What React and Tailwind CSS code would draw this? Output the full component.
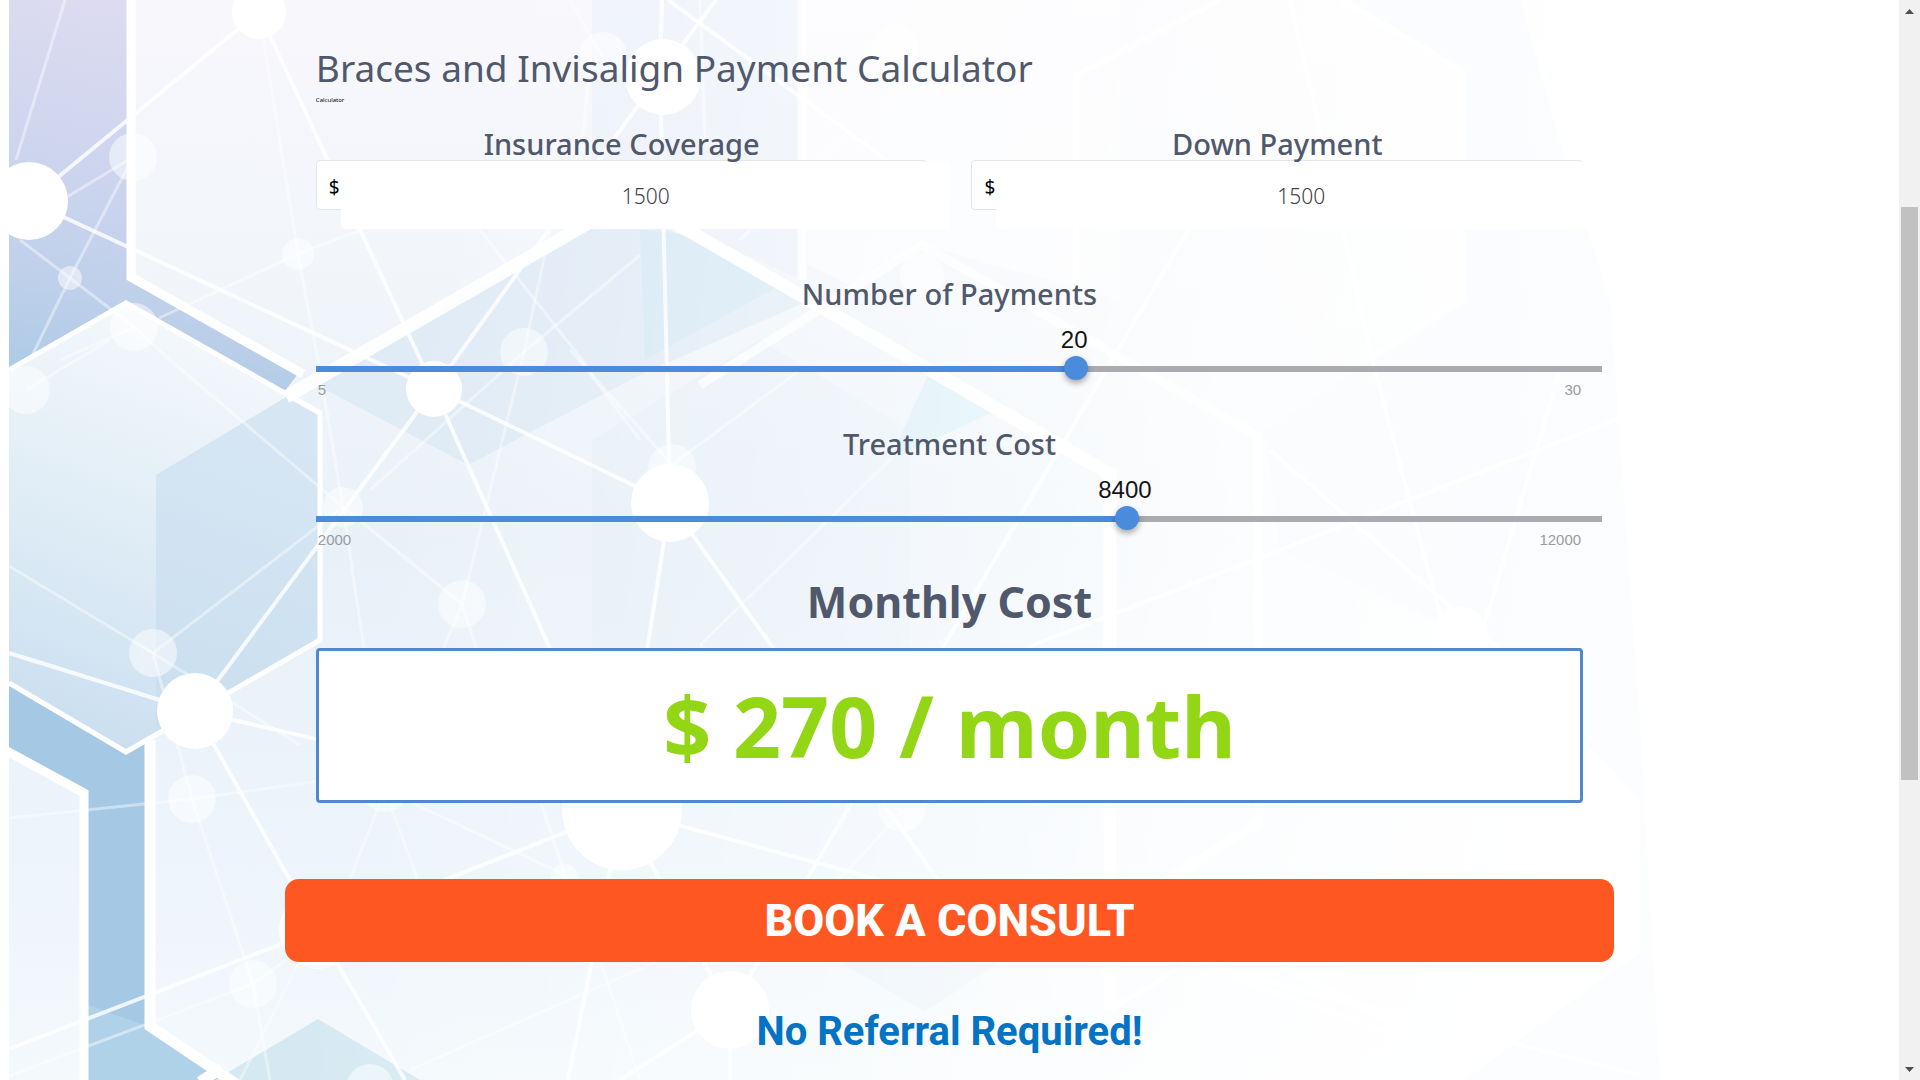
import { useState } from "react";

const strongLines = [
  [29, 201, 259, 12], [29, 201, 434, 389], [259, 12, 434, 389], [660, 75, 434, 389],
  [434, 389, 670, 503], [434, 389, 195, 711], [434, 389, 622, 810], [195, 711, 9, 653],
  [195, 711, 318, 930], [195, 711, 622, 810], [318, 930, 9, 1049], [318, 930, 622, 810],
  [318, 930, 405, 1080], [622, 810, 670, 503], [670, 503, 660, 75], [670, 503, 945, 890],
  [622, 810, 880, 880], [1200, 210, 730, 1010], [730, 1010, 622, 810], [730, 1010, 620, 1080],
  [730, 1010, 730, 1080], [622, 810, 568, 1080], [660, 75, 662, 0], [660, 75, 716, 0],
  [668, 0, 900, 170], [1028, 647, 1280, 550], [1280, 550, 1770, 360], [1270, 450, 1500, 650],
  [1375, 370, 1440, 615], [1280, 985, 1640, 1075], [1200, 960, 1280, 985], [1110, 1010, 1190, 962],
  [1290, 0, 1375, 370], [1190, 962, 1465, 1060], [1560, 370, 1480, 640],
];

const dimLines = [
  [65, 0, 16, 160], [133, 157, 29, 220], [133, 157, 70, 278], [70, 278, 20, 240],
  [70, 278, 134, 327], [70, 278, 30, 360], [298, 254, 159, 318], [298, 254, 440, 200],
  [259, 12, 298, 254], [298, 254, 318, 360], [318, 360, 343, 507], [524, 352, 640, 255],
  [524, 352, 550, 230], [524, 352, 370, 490], [524, 352, 462, 604], [170, 360, 343, 507],
  [343, 507, 462, 604], [9, 566, 153, 653], [153, 653, 343, 507], [153, 653, 192, 799],
  [153, 653, 300, 745], [192, 799, 9, 818], [192, 799, 400, 770], [192, 799, 253, 984],
  [253, 984, 270, 1080], [343, 507, 385, 790], [385, 790, 318, 960], [253, 984, 9, 1076],
  [462, 604, 385, 790], [462, 604, 500, 720], [385, 790, 425, 900], [385, 790, 565, 875],
  [134, 327, 60, 360], [134, 327, 170, 360], [26, 390, 110, 340], [565, 875, 540, 800],
  [672, 465, 800, 370], [672, 465, 570, 350], [580, 360, 640, 440], [902, 812, 700, 645],
  [902, 812, 820, 900], [480, 230, 590, 370], [240, 1080, 300, 960], [410, 1070, 660, 960],
  [700, 645, 900, 450], [600, 960, 640, 1080], [253, 984, 300, 950],
  [603, 58, 570, 0], [580, 170, 590, 60], [700, 0, 705, 140], [740, 240, 850, 130],
];

const strongNodes = [
  [29, 201, 39], [259, 12, 27], [434, 389, 28], [670, 503, 39], [195, 711, 38],
  [622, 810, 60], [730, 1010, 39], [663, 77, 38], [318, 930, 39], [1460, 635, 28],
];

const dimNodes = [
  [133, 157, 24], [70, 278, 12], [298, 254, 16], [134, 327, 24], [26, 390, 24],
  [524, 352, 24], [343, 507, 20], [153, 653, 24], [462, 604, 24], [192, 799, 24],
  [253, 984, 24], [370, 1088, 24], [385, 788, 24], [672, 468, 24], [902, 808, 24],
  [565, 878, 14], [603, 56, 24], [895, 48, 24], [922, 275, 22],
];

function HexagonBackdrop() {
  return (
    <svg
      aria-hidden="true"
      className="absolute inset-0 h-full w-full"
      viewBox="0 0 1899 1080"
      preserveAspectRatio="xMinYMin slice"
    >
      <defs>
        <linearGradient id="deep" gradientUnits="userSpaceOnUse" x1="100" y1="0" x2="20" y2="400">
          <stop offset="0" stopColor="#dddbf0" />
          <stop offset="0.4" stopColor="#cdd5ee" />
          <stop offset="0.7" stopColor="#bfd0ea" />
          <stop offset="1" stopColor="#a8c8e5" />
        </linearGradient>
        <linearGradient id="pale" x1="0" y1="0" x2="0" y2="1">
          <stop offset="0" stopColor="#f8f7fc" />
          <stop offset="0.14" stopColor="#f4f6fb" />
          <stop offset="0.28" stopColor="#f1f5fa" />
          <stop offset="0.5" stopColor="#e9f1f8" />
          <stop offset="0.8" stopColor="#edf4fb" />
          <stop offset="1" stopColor="#f4f9fc" />
        </linearGradient>
        <linearGradient id="hexFill" gradientUnits="userSpaceOnUse" x1="240" y1="340" x2="90" y2="740">
          <stop offset="0" stopColor="#f5f8fc" />
          <stop offset="0.5" stopColor="#e0edf6" />
          <stop offset="1" stopColor="#cbdff0" />
        </linearGradient>
        <linearGradient id="fade" gradientUnits="userSpaceOnUse" x1="450" y1="0" x2="1650" y2="160">
          <stop offset="0" stopColor="#fff" stopOpacity="0" />
          <stop offset="0.35" stopColor="#fff" stopOpacity="0.35" />
          <stop offset="0.7" stopColor="#fff" stopOpacity="0.82" />
          <stop offset="1" stopColor="#fff" stopOpacity="1" />
        </linearGradient>
      </defs>

      <rect width="1899" height="1080" fill="#fefefe" />
      <rect x="9" width="1640" height="1080" fill="url(#pale)" />

      <path d="M9 0H131V278L298 374L284 392L126 303L9 370Z" fill="url(#deep)" />
      <path d="M9 683L126 752L150 738V1027L222 1080H88V793L9 748Z" fill="#a5c8e4" />
      <path d="M88 1005L150 1027L222 1068L200 1080H88Z" fill="#b0d2e8" />

      <path d="M126 303L320 413V640L126 752L9 683V370Z" fill="url(#hexFill)" />
      <path d="M156 475L286 397L318 415V640L156 735Z" fill="#c6dcee" fillOpacity="0.6" />
      <path d="M315 384L620 205L810 300L640 375L468 465Z" fill="#d8e7f4" fillOpacity="0.7" />
      <path d="M592 440L760 340L910 430V648H592Z" fill="#dfebf6" fillOpacity="0.4" />
      <path d="M690 235L775 288L645 360L640 230Z" fill="#cde6f3" fillOpacity="0.6" />
      <path d="M930 370L993 412L890 460Z" fill="#c6e8f6" fillOpacity="0.7" />
      <path d="M318 1019L420 1080H215Z" fill="#d6e9f2" />
      <path d="M840 962H1000L925 1012Z" fill="#e1edf5" fillOpacity="0.7" />

      <path d="M592 0H802V280L690 230H592Z" fill="#e6edf7" fillOpacity="0.5" />
      <path d="M802 0H1120V300L922 245L850 285L802 262Z" fill="#fff" fillOpacity="0.5" />
      <rect x="9" width="1890" height="1080" fill="url(#fade)" />
      <path
        d="M1350 0H1520L1565 160L1610 300L1640 720L1660 1080H1465L1640 950V800L1500 650L1280 550L1265 430L1462 300V70Z"
        fill="#f8fbff"
        fillOpacity="0.4"
      />

      <g stroke="#fff" strokeWidth="3" strokeOpacity="0.42">
        {dimLines.map(([x1, y1, x2, y2], i) => (
          <line key={i} x1={x1} y1={y1} x2={x2} y2={y2} />
        ))}
      </g>
      <g fill="#fff" fillOpacity="0.5">
        {dimNodes.map(([cx, cy, r], i) => (
          <circle key={i} cx={cx} cy={cy} r={r} />
        ))}
      </g>
      <g stroke="#fff" strokeWidth="4" strokeOpacity="0.8">
        {strongLines.map(([x1, y1, x2, y2], i) => (
          <line key={i} x1={x1} y1={y1} x2={x2} y2={y2} />
        ))}
      </g>

      <g fill="none" stroke="#fff">
        <path d="M131 0V277L303 374" strokeWidth="9" />
        <path d="M9 370L126 303L320 413V640L126 752L9 683" strokeWidth="5" />
        <path d="M5 750L84 793V1080" strokeWidth="9" />
        <path d="M150 740V1026L236 1084M222 1068L200 1082" strokeWidth="11" />
        <path d="M286 397L632 198L1110 474V1010" strokeWidth="13" strokeOpacity="0.9" />
        <path d="M802 0V280" strokeWidth="9" strokeOpacity="0.8" />
        <path d="M700 385L922 245L1258 436V823L1150 890" strokeWidth="9" strokeOpacity="0.7" />
        <path d="M1076 300V75L1220 0M1340 0L1462 70V300L1370 360" strokeWidth="6" strokeOpacity="0.7" />
        <path d="M1280 965L1465 1060L1500 1035L1640 950" strokeWidth="7" strokeOpacity="0.8" />
      </g>

      <g fill="#fff">
        {strongNodes.map(([cx, cy, r], i) => (
          <circle key={i} cx={cx} cy={cy} r={r} />
        ))}
        <rect width="9" height="1080" />
      </g>
    </svg>
  );
}

function MoneyField({ id, label, value, onChange }) {
  return (
    <div className="min-w-0">
      <label htmlFor={id} className="block text-center text-[29px] leading-8 font-medium">
        {label}
      </label>
      <div className="flex h-[50px] rounded border border-[#e4e5e7] bg-white">
        <span className="w-6 shrink-0 pt-2.5 pl-3 text-[19px] leading-8 text-black">$</span>
        <input
          id={id}
          type="text"
          inputMode="numeric"
          value={value}
          onChange={(e) => onChange(e.target.value)}
          className="mt-px -mr-6 h-[67px] w-full shrink-0 rounded bg-white text-center text-[21px] font-light text-[#3f4247] outline-none"
        />
      </div>
    </div>
  );
}

function SliderField({ id, label, min, max, step, value, onChange }) {
  const percent = ((value - min) / (max - min)) * 100;
  return (
    <div>
      <label htmlFor={id} className="block text-center text-[29px] leading-8 font-medium">
        {label}
      </label>
      <div className="mt-3 h-9 font-['Liberation_Sans',sans-serif]">
        <output
          htmlFor={id}
          className="block w-20 -translate-x-[42px] text-center text-2xl leading-9 text-[#151515]"
          style={{ marginLeft: `${percent}%` }}
        >
          {value}
        </output>
      </div>
      <div className="relative mt-2 -mr-[19px] h-1.5 bg-[#a9abb0] pr-[19px]">
        <div className="h-full bg-[#4a8cdb]" style={{ width: `${percent}%` }} />
        <input
          id={id}
          type="range"
          min={min}
          max={max}
          step={step}
          value={value}
          onChange={(e) => onChange(Number(e.target.value))}
          className="absolute -top-2.5 right-[7px] -left-3 h-6 cursor-pointer appearance-none bg-transparent outline-none [&::-webkit-slider-thumb]:h-6 [&::-webkit-slider-thumb]:w-6 [&::-webkit-slider-thumb]:appearance-none [&::-webkit-slider-thumb]:rounded-full [&::-webkit-slider-thumb]:bg-[#4a8cdb] [&::-webkit-slider-thumb]:shadow-[0_3px_6px_rgba(0,0,0,0.35)]"
        />
      </div>
      <div className="mt-2 flex justify-between px-0.5 font-['Liberation_Sans',sans-serif] text-[15px] leading-5 text-[#999b9f]">
        <span>{min}</span>
        <span>{max}</span>
      </div>
    </div>
  );
}

function ScrollRail() {
  return (
    <div className="flex w-[21px] shrink-0 flex-col bg-[#f1f1f1] px-0.5">
      <button type="button" aria-label="Scroll up" className="flex h-[22px] items-center justify-center">
        <svg width="9" height="5" viewBox="0 0 9 5" fill="#505050"><path d="M4.500 0L9 5H0Z" /></svg>
      </button>
      <div className="flex-[185]" />
      <div className="flex-[573] bg-[#c1c1c1]" />
      <div className="flex-[278]" />
      <button type="button" aria-label="Scroll down" className="flex h-[22px] items-center justify-center">
        <svg width="9" height="5" viewBox="0 0 9 5" fill="#505050"><path d="M0 0H9L4.500 5Z" /></svg>
      </button>
    </div>
  );
}

export default function App() {
  const [insurance, setInsurance] = useState("1500");
  const [down, setDown] = useState("1500");
  const [payments, setPayments] = useState(20);
  const [cost, setCost] = useState(8400);
  const monthly = Math.max(0, Math.round((cost - Number(insurance) - Number(down)) / payments));

  return (
    <div className="flex min-h-screen font-['Noto_Sans',sans-serif] text-[#50586c]">
      <main className="relative min-w-0 flex-1 overflow-hidden pt-11 pb-6">
        <HexagonBackdrop />
        <div className="relative mx-auto w-[70%]">
          <section className="px-[31px]">
            <h1 className="text-[37px] leading-12 font-normal">Braces and Invisalign Payment Calculator</h1>
            <p className="text-[6px] leading-4 text-black">Calculator</p>
            <div className="mt-5 grid grid-cols-2 gap-11">
              <MoneyField id="insurance" label="Insurance Coverage" value={insurance} onChange={setInsurance} />
              <MoneyField id="down" label="Down Payment" value={down} onChange={setDown} />
            </div>
            <div className="mt-[68px] grid gap-7">
              <SliderField id="payments" label="Number of Payments" min={5} max={30} step={1} value={payments} onChange={setPayments} />
              <SliderField id="cost" label="Treatment Cost" min={2000} max={12000} step={100} value={cost} onChange={setCost} />
            </div>
            <h2 className="mt-6 text-center text-[43px] leading-14 font-bold">Monthly Cost</h2>
            <div className="mt-[18px] flex h-[155px] items-center justify-center rounded border-3 border-[#4f88cb] bg-white text-[84px] font-bold text-[#92d615]">
              $ {monthly} / month
            </div>
          </section>
          <div className="font-['Roboto',sans-serif] font-bold">
            <button type="button" className="mt-[76px] h-[83px] w-full rounded-[14px] bg-[#ff5722] text-[45px] font-extrabold text-white">
              BOOK A CONSULT
            </button>
            <p className="mt-[46px] text-center text-[40px] leading-12 text-[#0573c4]">No Referral Required!</p>
          </div>
        </div>
      </main>
      <ScrollRail />
    </div>
  );
}
